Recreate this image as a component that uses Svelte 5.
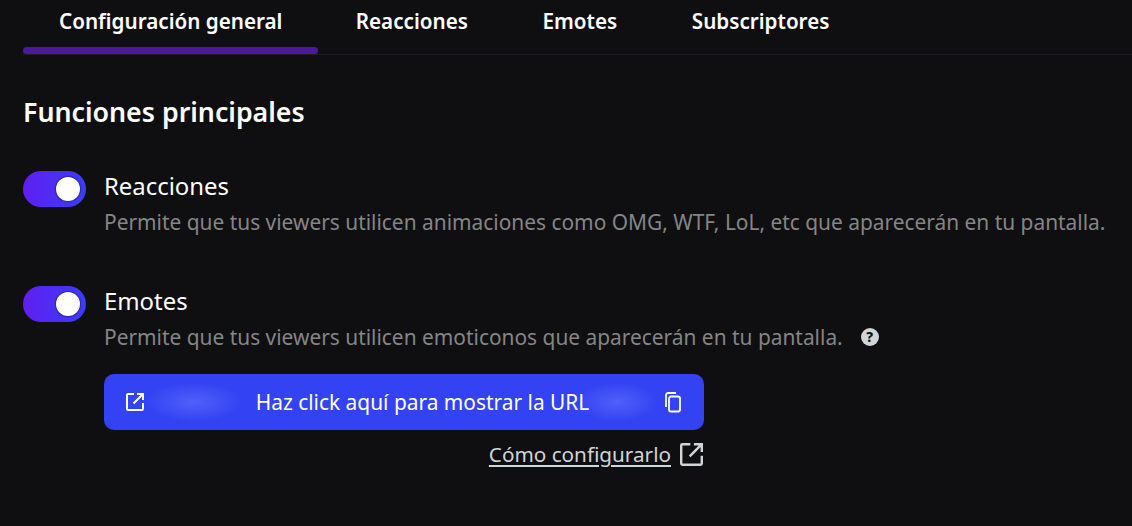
<script>
  const tabs = ['Configuración general', 'Reacciones', 'Emotes', 'Subscriptores'];
</script>

<div class="page">
  <nav class="tabs">
    {#each tabs as tab, i}
      <div class="tab" class:active={i === 0}>{tab}</div>
    {/each}
  </nav>

  <main class="content">
    <h2>Funciones principales</h2>

    <section class="row first">
      <div class="toggle"><span class="knob"></span></div>
      <div class="info">
        <div class="name">Reacciones</div>
        <p>Permite que tus viewers utilicen animaciones como OMG, WTF, LoL, etc que aparecerán en tu pantalla.</p>
      </div>
    </section>

    <section class="row second">
      <div class="toggle"><span class="knob"></span></div>
      <div class="info">
        <div class="name">Emotes</div>
        <p class="help">
          <span>Permite que tus viewers utilicen emoticonos que aparecerán en tu pantalla.</span>
          <span class="q">?</span>
        </p>
        <div class="urlbox">
          <button class="url">
            <svg viewBox="0 0 24 24" width="24" height="24" fill="none" stroke="currentColor" stroke-width="2"><path d="M11 4H5a1 1 0 0 0-1 1v14a1 1 0 0 0 1 1h14a1 1 0 0 0 1-1v-6"/><path d="M14 4h6v6M20 4l-9.500 9.500"/></svg>
            <span class="label">Haz click aquí para mostrar la URL</span>
            <svg viewBox="0 0 24 24" width="24" height="24" fill="none" stroke="currentColor" stroke-width="1.800"><path d="M6 17V5a2 2 0 0 1 2-2h8" /><rect x="9" y="6.500" width="11" height="15" rx="2"/></svg>
          </button>
          <a class="how" href="#how">
            <span>Cómo configurarlo</span>
            <svg viewBox="2.500 2.500 19 19" width="23" height="23" fill="none" stroke="currentColor" stroke-width="2"><path d="M11 3.500H4.500a1 1 0 0 0-1 1v15a1 1 0 0 0 1 1h15a1 1 0 0 0 1-1V13"/><path d="M14 3.500h6.500V10M20.500 3.500 10.500 13.500"/></svg>
          </a>
        </div>
      </div>
    </section>
  </main>
</div>

<style>
  :global(body) {
    margin: 0;
    background: #0f0f12;
  }
  .page {
    height: 526px;
    overflow: hidden;
    box-sizing: border-box;
    padding-left: 23px;
    font-family: "Noto Sans", sans-serif;
    color: #fff;
    background: #0f0f12;
  }
  .tabs {
    display: flex;
    height: 55px;
    box-sizing: border-box;
    border-bottom: 1px solid #1f1f23;
  }
  .tab {
    padding: 6px 37.300px 0;
    font-size: 20.650px;
    line-height: 30px;
    font-weight: 600;
    height: 55px;
    box-sizing: border-box;
    position: relative;
  }
  .tab.active {
    padding: 6px 36px 0;
  }
  .tab.active::after {
    content: "";
    position: absolute;
    left: 0;
    right: 0;
    bottom: 1px;
    height: 7px;
    border-radius: 4px;
    background: #4a1a9e;
  }
  .content {
    padding-right: 20px;
  }
  h2 {
    margin: 38px 0 0;
    font-size: 26.750px;
    line-height: 38px;
    font-weight: 600;
  }
  .row {
    display: flex;
    gap: 18px;
  }
  .row.first {
    margin-top: 40px;
  }
  .row.second {
    margin-top: 49px;
  }
  .toggle {
    width: 63px;
    height: 36px;
    flex: none;
    border-radius: 18px;
    background: linear-gradient(90deg, #5f1ff0, #3a3df8);
    position: relative;
  }
  .knob {
    position: absolute;
    right: 6px;
    top: 6px;
    width: 24px;
    height: 24px;
    border-radius: 50%;
    background: #fff;
    box-shadow: 0 0 1px 1px rgba(30, 20, 90, 0.5);
  }
  .name {
    font-size: 23.900px;
    line-height: 30px;
    padding-bottom: 2px;
    color: #fff;
  }
  p {
    margin: 4px 0 0;
    font-size: 20.900px;
    line-height: 30px;
    color: #858585;
    white-space: nowrap;
  }
  .help {
    display: flex;
    align-items: center;
    gap: 18px;
  }
  .q {
    width: 18px;
    height: 18px;
    border-radius: 50%;
    background: #d0d5d8;
    color: #111;
    font-size: 14px;
    line-height: 18px;
    font-weight: 800;
    text-align: center;
  }
  .urlbox {
    width: 600px;
    margin-top: 22px;
    display: flex;
    flex-direction: column;
    align-items: flex-end;
  }
  .url {
    width: 600px;
    height: 56px;
    padding: 0 20px 0 19px;
    border: 0;
    border-radius: 10px;
    display: flex;
    align-items: center;
    justify-content: space-between;
    color: #fff;
    font: inherit;
    background:
      radial-gradient(ellipse 50px 20px at 90px 28px, #5060fa, transparent),
      radial-gradient(ellipse 42px 20px at 513px 28px, #5060fa, transparent),
      #3342f2;
  }
  .label {
    margin-left: 38px;
    font-size: 20.900px;
    line-height: 28px;
  }
  .how {
    margin-top: 9px;
    margin-right: 1px;
    display: flex;
    align-items: center;
    gap: 9px;
    color: #d0d5d8;
    font-size: 20.700px;
    line-height: 30px;
    text-decoration: none;
  }
  .how span {
    text-decoration: underline;
    text-underline-offset: 3px;
  }
</style>
